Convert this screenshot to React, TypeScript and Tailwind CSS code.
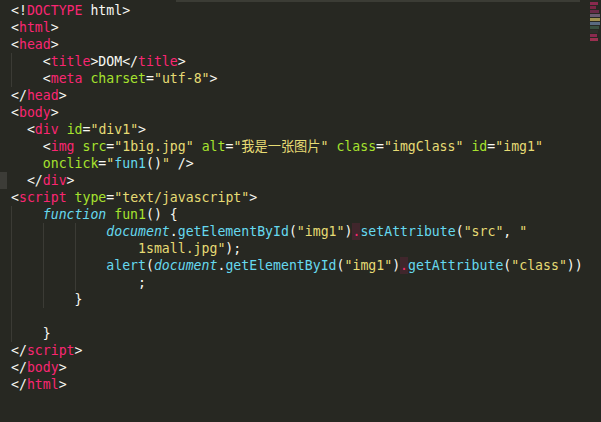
type Tok = [string, string];

const P = "text-[#f92672]";
const G = "text-[#a6e22e]";
const Y = "text-[#e6db74]";
const W = "text-[#f8f8f2]";
const C = "text-[#66d9ef]";
const CI = "text-[#66d9ef] italic";
const DOT = "text-[#f92672] bg-[#40262c]";

type Line = { guides: number; pad: string; toks: Tok[]; mark?: boolean };

const lines: Line[] = [
  { guides: 0, pad: "", toks: [["<!", W], ["DOCTYPE", P], [" html", W], [">", W]] },
  { guides: 0, pad: "", toks: [["<", W], ["html", P], [">", W]] },
  { guides: 0, pad: "", toks: [["<", W], ["head", P], [">", W]] },
  { guides: 1, pad: "", toks: [["<", W], ["title", P], [">DOM</", W], ["title", P], [">", W]] },
  { guides: 1, pad: "", toks: [["<", W], ["meta", P], [" ", W], ["charset", G], ["=", W], ['"utf-8"', Y], [">", W]] },
  { guides: 0, pad: "", toks: [["</", W], ["head", P], [">", W]] },
  { guides: 0, pad: "", toks: [["<", W], ["body", P], [">", W]] },
  { guides: 0, pad: "  ", toks: [["<", W], ["div", P], [" ", W], ["id", G], ["=", W], ['"div1"', Y], [">", W]] },
  {
    guides: 0,
    pad: "    ",
    toks: [
      ["<", W], ["img", P], [" ", W], ["src", G], ["=", W], ['"1big.jpg"', Y], [" ", W],
      ["alt", G], ["=", W], ['"我是一张图片"', Y], [" ", W], ["class", G], ["=", W],
      ['"imgClass"', Y], [" ", W], ["id", G], ["=", W], ['"img1"', Y],
    ],
  },
  { guides: 0, pad: "    ", toks: [["onclick", G], ["=", W], ['"', Y], ["fun1", C], ["()", W], ['"', Y], [" />", W]] },
  { guides: 0, pad: "  ", toks: [["</", W], ["div", P], [">", W]], mark: true },
  { guides: 0, pad: "", toks: [["<", W], ["script", P], [" ", W], ["type", G], ["=", W], ['"text/javascript"', Y], [">", W]] },
  { guides: 1, pad: "", toks: [["function", CI], [" ", W], ["fun1", G], ["() {", W]] },
  {
    guides: 3,
    pad: "",
    toks: [
      ["document", CI], [".", W], ["getElementById", C], ["(", W], ['"img1"', Y], [")", W],
      [".", DOT], ["setAttribute", C], ["(", W], ['"src"', Y], [", ", W], ['"', Y],
    ],
  },
  { guides: 3, pad: "    ", toks: [['1small.jpg"', Y], [");", W]] },
  {
    guides: 3,
    pad: "",
    toks: [
      ["alert", C], ["(", W], ["document", CI], [".", W], ["getElementById", C], ["(", W],
      ['"img1"', Y], [")", W], [".", DOT], ["getAttribute", C], ["(", W], ['"class"', Y], ["))", W],
    ],
  },
  { guides: 3, pad: "    ", toks: [[";", W]] },
  { guides: 2, pad: "", toks: [["}", W]] },
  { guides: 1, pad: "", toks: [] },
  { guides: 1, pad: "", toks: [["}", W]] },
  { guides: 0, pad: "", toks: [["</", W], ["script", P], [">", W]] },
  { guides: 0, pad: "", toks: [["</", W], ["body", P], [">", W]] },
  { guides: 0, pad: "", toks: [["</", W], ["html", P], [">", W]] },
];

const mini = [
  "bg-[#8a2a4e] w-[8px]",
  "bg-[#7a2545] w-[6px]",
  "bg-[#6a2a48] w-[9px]",
  "bg-[#6b5a70] w-[10px]",
  "bg-[#a09050] w-[10px]",
  "bg-[#5a6a80] w-[10px]",
  "bg-[#3a5040] w-[9px]",
  "bg-[#2f2f2a] w-[8px]",
  "bg-[#8a2a4e] w-[7px]",
  "bg-[#9a3050] w-[8px]",
];

export default function App() {
  return (
    <div className="flex h-[422px] w-[601px] overflow-hidden bg-[#272822] font-['DejaVu_Sans_Mono','Noto_Sans_CJK_SC',monospace] text-[13.2px] leading-[17px]">
      <div className="flex flex-1 flex-col">
        <div className="ml-[176px] mr-[10px] h-[2px] bg-[#3b3c35]" />
        <div className="flex flex-col">
          {lines.map((l, i) => (
            <div key={i} className="flex h-[17px] whitespace-pre">
              <div className={`w-[7px] ${l.mark ? "bg-[#3c3c37]" : ""}`} />
              <div className="flex pl-[4px]">
                {Array.from({ length: l.guides }).map((_, g) => (
                  <span key={g} className="w-[4ch] border-l border-[#3b3b35]" />
                ))}
                <span>{l.pad}</span>
                {l.toks.map(([t, c], k) => (
                  <span key={k} className={c}>
                    {t}
                  </span>
                ))}
              </div>
            </div>
          ))}
        </div>
      </div>
      <div className="flex w-[11px] flex-col gap-[1px] pt-[2px]">
        {mini.map((m, i) => (
          <div key={i} className={`h-[3px] ${m}`} />
        ))}
      </div>
    </div>
  );
}
